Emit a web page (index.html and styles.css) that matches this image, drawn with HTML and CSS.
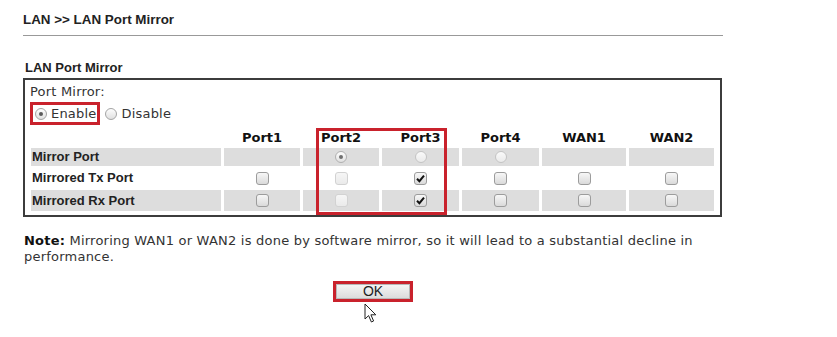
FILE: index.html
```html
<!DOCTYPE html>
<html>
  <head>
    <title>LAN Port Mirror</title>
    <link rel="stylesheet" href="styles.css">
  </head>
  <body>
    <div class="page">
      <h1 class="title">LAN &gt;&gt; LAN Port Mirror</h1>
      <h2 class="section-title">LAN Port Mirror</h2>

      <div class="mirror-panel">
        <div class="field-label">Port Mirror:</div>
        <div class="mode-row">
          <label class="mode-option mark"><span class="radio checked"></span>Enable</label>
          <label class="mode-option"><span class="radio"></span>Disable</label>
        </div>

        <table class="port-table">
          <colgroup>
            <col class="col-label">
            <col class="col-port">
            <col class="col-port">
            <col class="col-port3">
            <col class="col-port3">
            <col class="col-wan">
            <col class="col-wan2">
          </colgroup>
          <tr class="head-row">
            <th></th>
            <th>Port1</th>
            <th>Port2</th>
            <th>Port3</th>
            <th>Port4</th>
            <th>WAN1</th>
            <th>WAN2</th>
          </tr>
          <tr class="shade row-mirror">
            <td class="row-label">Mirror Port</td>
            <td></td>
            <td><span class="radio checked dim"></span></td>
            <td><span class="radio light"></span></td>
            <td><span class="radio light"></span></td>
            <td></td>
            <td></td>
          </tr>
          <tr class="row-tx">
            <td class="row-label">Mirrored Tx Port</td>
            <td><span class="check"></span></td>
            <td><span class="check disabled"></span></td>
            <td><span class="check checked"><svg width="11" height="11" viewBox="0 0 11 11"><path d="M2 5.8 L4.4 8.2 L9 2.6" fill="none" stroke="#111" stroke-width="2"/></svg></span></td>
            <td><span class="check"></span></td>
            <td><span class="check"></span></td>
            <td><span class="check"></span></td>
          </tr>
          <tr class="shade row-rx">
            <td class="row-label">Mirrored Rx Port</td>
            <td><span class="check"></span></td>
            <td><span class="check disabled"></span></td>
            <td><span class="check checked"><svg width="11" height="11" viewBox="0 0 11 11"><path d="M2 5.8 L4.4 8.2 L9 2.6" fill="none" stroke="#111" stroke-width="2"/></svg></span></td>
            <td><span class="check"></span></td>
            <td><span class="check"></span></td>
            <td><span class="check"></span></td>
          </tr>
        </table>

        <!-- annotation around Port2 / Port3 -->
        <div class="port-mark"></div>
      </div>

      <p class="note"><b>Note:</b> Mirroring WAN1 or WAN2 is done by software mirror, so it will lead to a substantial decline in performance.</p>

      <div class="actions">
        <span class="button-wrap">
          <span class="button-mark"><button class="ok-button">OK</button></span>
          <svg class="cursor-icon" width="14" height="21" viewBox="0 0 14 21">
            <path d="M1 1 L1 16 L4.6 12.6 L7.4 19 L9.6 18 L6.9 11.8 L11.8 11.8 Z" fill="#fff" stroke="#222" stroke-width="1" stroke-linejoin="round"/>
          </svg>
        </span>
      </div>
    </div>
  </body>
</html>
```

FILE: styles.css
```css
body {
  background: #FFF;
  margin: 0px;
}

.page {
  padding-left: 23px;
  padding-bottom: 40px;
  width: 700px;
}

.title {
  border-bottom: solid #999 1px;
  color: #222;
  font-family: "Liberation Sans", Arial, sans-serif;
  font-size: 13.4px;
  font-weight: bold;
  line-height: 16px;
  margin: 0;
  padding-bottom: 7px;
  padding-top: 12px;
}

.section-title {
  color: #222;
  font-family: "Liberation Sans", Arial, sans-serif;
  font-size: 13px;
  font-weight: bold;
  line-height: 16px;
  margin: 24px 0 2px 2px;
}

.mirror-panel {
  border: solid #3c3c3c 2px;
  box-sizing: border-box;
  color: #333;
  font-family: "DejaVu Sans", Verdana, sans-serif;
  font-size: 13px;
  letter-spacing: 0.2px;
  padding: 3px 3px 2px 3px;
  position: relative;
  width: 699px;
}

.field-label {
  line-height: 17px;
  padding-left: 2px;
}

.mode-row {
  align-items: center;
  display: flex;
  margin-top: 2px;
  padding-left: 2px;
}

.mode-option {
  align-items: center;
  display: flex;
  height: 17px;
  margin-right: 4px;
}

.mode-option .radio {
  margin-right: 4px;
}

.mode-option.mark {
  border: solid #c9222c 3px;
  margin-right: 5px;
  padding: 0 1px 0 2px;
}

.radio {
  background: linear-gradient(#FDFDFD, #E0E0E0);
  border: solid #A4A4A4 1px;
  border-radius: 50%;
  box-sizing: border-box;
  display: inline-block;
  height: 12px;
  position: relative;
  vertical-align: middle;
  width: 12px;
}

.radio.light {
  background: linear-gradient(#FAFAFA, #EAEAEA);
  border-color: #C4C4C4;
}

.radio.checked::after {
  background: #5A5A5A;
  border-radius: 50%;
  content: "";
  height: 4px;
  left: 3px;
  position: absolute;
  top: 3px;
  width: 4px;
}

.radio.dim {
  border-color: #B0B0B0;
}

.radio.dim::after {
  background: #707070;
}

.port-table {
  border-spacing: 3px 2px;
  letter-spacing: 0;
  margin-top: 1px;
  table-layout: fixed;
}

.col-label { width: 190px; }
.col-port { width: 76px; }
.col-port3 { width: 77px; }
.col-wan { width: 84px; }
.col-wan2 { width: 85px; }

.port-table th {
  color: #111;
  font-family: "DejaVu Sans", Verdana, sans-serif;
  font-size: 13px;
  font-weight: bold;
  height: 18px;
  padding: 0;
  text-align: center;
}

.port-table td {
  line-height: 0;
  padding: 0;
  text-align: center;
}

.port-table .shade td {
  background: #DDDDDD;
}

.row-mirror td { height: 18px; }
.row-tx td { height: 20px; }
.row-rx td { height: 21px; }

.port-table .row-label {
  color: #222;
  font-family: "Liberation Sans", Arial, sans-serif;
  font-size: 13px;
  font-weight: bold;
  line-height: 16px;
  padding-left: 1px;
  text-align: left;
}

.check {
  background: linear-gradient(#F7F7F7, #DADADA);
  border: solid #9C9C9C 1px;
  border-radius: 3px;
  box-sizing: border-box;
  display: inline-block;
  height: 13px;
  vertical-align: middle;
  width: 13px;
}

.check.disabled {
  background: linear-gradient(#F6F6F6, #EAEAEA);
  border-color: #D2D2D2;
}

.check.checked svg {
  display: block;
  margin: 0;
}

.port-mark {
  border: solid #c9222c 3px;
  box-sizing: border-box;
  height: 87px;
  left: 291px;
  position: absolute;
  top: 48px;
  width: 131px;
}

.note {
  color: #333;
  font-family: "DejaVu Sans", Verdana, sans-serif;
  font-size: 13px;
  letter-spacing: 0.22px;
  line-height: 16px;
  margin: 16px 0 0 1px;
}

.note b {
  color: #111;
}

.actions {
  margin-top: 16px;
  text-align: center;
}

.button-wrap {
  display: inline-block;
  position: relative;
}

.button-mark {
  border: solid #c9222c 3px;
  display: inline-block;
  line-height: 0;
}

.ok-button {
  background: linear-gradient(#F4F4F4, #DCDCDC);
  border: solid #B8B8B8 1px;
  color: #222;
  font-family: "Liberation Sans", Arial, sans-serif;
  font-size: 14px;
  height: 15px;
  line-height: 13px;
  padding: 0;
  width: 74px;
}

.cursor-icon {
  left: 31px;
  position: absolute;
  top: 22px;
}
```
